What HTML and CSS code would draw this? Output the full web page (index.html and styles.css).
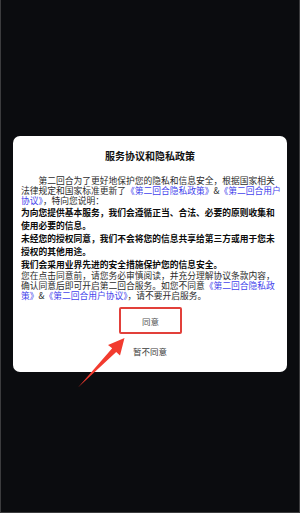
FILE: index.html
```html
<!DOCTYPE html>
<html lang="zh-CN">
<head>
<meta charset="utf-8">
<title>服务协议和隐私政策</title>
<link rel="stylesheet" href="styles.css">
</head>
<body>
<div class="screen">
  <div class="dialog">
    <h1 class="title">服务协议和隐私政策</h1>
    <p class="para intro">第二回合为了更好地保护您的隐私和信息安全，根据国家相关<br>法律规定和国家标准更新了<span class="link">《第二回合隐私政策》</span>&amp;<span class="link">《第二回合用户<br>协议》</span>，特向您说明：</p>
    <p class="para strong">为向您提供基本服务，我们会遵循正当、合法、必要的原则收集和<br>使用必要的信息。<br>未经您的授权同意，我们不会将您的信息共享给第三方或用于您未<br>授权的其他用途。<br>我们会采用业界先进的安全措施保护您的信息安全。</p>
    <p class="para">您在点击同意前，请您务必审慎阅读，并充分理解协议条款内容，<br>确认同意后即可开启第二回合服务。如您不同意<span class="link">《第二回合隐私政<br>策》</span>&amp;<span class="link">《第二回合用户协议》</span>，请不要开启服务。</p>
    <div class="actions">
      <button class="btn agree" type="button">同意</button>
      <button class="btn decline" type="button">暂不同意</button>
    </div>
  </div>
  <svg class="arrow" width="300" height="513" viewBox="0 0 300 513" aria-hidden="true">
    <polygon points="123.5,338 107,345 111.2,348.3 77,387.5 115.2,352 119,355.5" fill="#f23b2f"/>
  </svg>
</div>
</body>
</html>
```

FILE: styles.css
```css
* {
  box-sizing: border-box;
}

html, body {
  margin: 0;
  padding: 0;
  background: #0b0c0f;
}

.screen {
  position: relative;
  width: 300px;
  height: 513px;
  padding: 136px 13px 0 13px;
  background: #0b0c0f;
  border-left: 1px solid #3c3c3e;
  border-right: 1px solid #3c3c3e;
  border-bottom: 1px solid #3c3c3e;
  font-family: "Noto Sans CJK SC", "Noto Sans", sans-serif;
}

.dialog {
  width: 274px;
  height: 236px;
  margin-left: -1px;
  background: #ffffff;
  border-radius: 7px;
  padding: 13px 0 0 8px;
  display: flex;
  flex-direction: column;
}

.title {
  margin: 0 0 0 -8px;
  font-size: 10px;
  line-height: 14px;
  font-weight: 700;
  color: #111;
  text-align: center;
}

.para {
  margin: 0;
  font-size: 8.75px;
  line-height: 10.2px;
  color: #2c2c2c;
  white-space: nowrap;
}

.intro {
  margin-top: 12.5px;
  text-indent: 2em;
}

.strong {
  font-weight: 700;
  color: #0c0c0c;
  line-height: 13px;
  margin-top: -0.3px;
}

.link {
  color: #4444ec;
}

.actions {
  margin-left: -8px;
  display: flex;
  flex-direction: column;
  align-items: center;
}

.btn {
  font-family: "Noto Sans CJK SC", "Noto Sans", sans-serif;
  background: transparent;
  border: 0;
  padding: 0;
  margin: 0;
  color: #444;
}

.agree {
  margin-top: 6px;
  margin-left: 1px;
  width: 63px;
  height: 27px;
  border: 2px solid #e2403a;
  border-radius: 2px;
  font-size: 8.5px;
  line-height: 12px;
  color: #555;
}

.decline {
  margin-top: 11px;
  font-size: 8.5px;
  line-height: 12px;
  color: #3a3a3a;
}

.arrow {
  position: absolute;
  left: 0;
  top: 0;
  pointer-events: none;
}
```
